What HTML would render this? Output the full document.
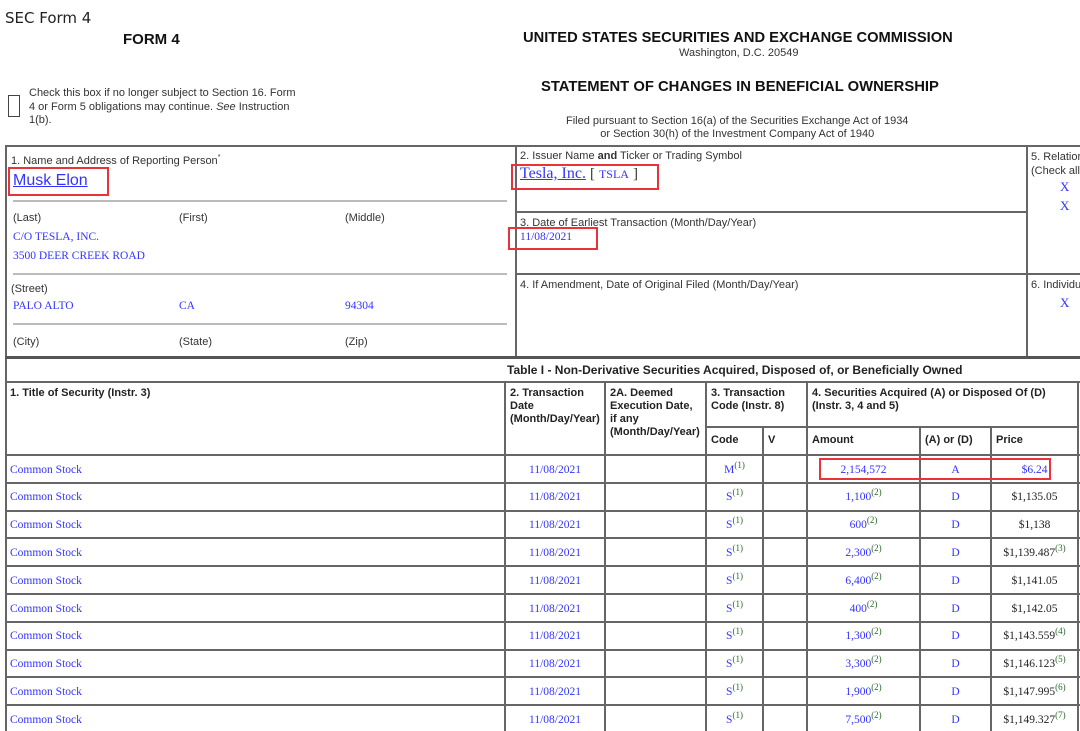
<!DOCTYPE html>
<html><head><meta charset="utf-8"><style>
*{margin:0;padding:0;box-sizing:border-box}
body{width:1080px;height:731px;overflow:hidden;background:#fff;position:relative;font-family:"Liberation Sans",Arial,sans-serif;color:#222}
.a{position:absolute;white-space:nowrap}
.h{position:absolute;background:#666;height:2px}
.v{position:absolute;background:#666;width:2px}
.d{position:absolute;height:2px;background:#bbb}
.s{font-size:11px;color:#333}
.b{font-family:"Liberation Serif",serif;color:#3333ff;font-size:11.5px}
.hd{font-size:11px;font-weight:bold;color:#222;line-height:13px}
.red{position:absolute;border:2px solid #e8333b}
sup{font-size:9px;color:#2a6a2a;vertical-align:5px;line-height:0}
u{text-decoration:underline}
</style></head><body>
<div class="a" style="left:5px;top:9px;font-size:15px;font-family:'DejaVu Sans',sans-serif;color:#222">SEC Form 4</div>
<div class="a" style="left:123px;top:31px;font-size:15px;font-weight:bold;color:#111">FORM 4</div>
<div class="a" style="left:523px;top:30px;font-size:14.7px;font-weight:bold;color:#111">UNITED STATES SECURITIES AND EXCHANGE COMMISSION</div>
<div class="a" style="left:679px;top:47px;font-size:11px;color:#333">Washington, D.C. 20549</div>
<div class="a" style="left:541px;top:79px;font-size:14.8px;font-weight:bold;color:#111">STATEMENT OF CHANGES IN BENEFICIAL OWNERSHIP</div>
<div class="a" style="left:566px;top:115px;font-size:11px;color:#333;text-align:center;line-height:13px">Filed pursuant to Section 16(a) of the Securities Exchange Act of 1934<br>or Section 30(h) of the Investment Company Act of 1940</div>
<div class="a" style="left:8px;top:95px;width:12px;height:22px;border:1.5px solid #444"></div>
<div class="a" style="left:29px;top:87px;font-size:11px;color:#333;line-height:13.5px">Check this box if no longer subject to Section 16. Form<br>4 or Form 5 obligations may continue. <i>See</i> Instruction<br>1(b).</div>

<div class="h" style="left:5px;top:145px;width:1075px"></div>
<div class="v" style="left:5px;top:145px;height:586px"></div>
<div class="v" style="left:515px;top:145px;height:212px"></div>
<div class="v" style="left:1026px;top:145px;height:212px"></div>
<div class="h" style="left:515px;top:211px;width:512px"></div>
<div class="h" style="left:515px;top:273px;width:565px"></div>
<div class="h" style="left:5px;top:356px;width:1075px;height:3px;background:#555"></div>
<div class="d" style="left:13px;top:200px;width:494px"></div>
<div class="d" style="left:13px;top:273px;width:494px"></div>
<div class="d" style="left:13px;top:323px;width:494px"></div>

<div class="a s" style="left:11px;top:155px">1. Name and Address of Reporting Person<sup style="color:#333;font-size:7px">*</sup></div>
<div class="a" style="left:13px;top:172px;font-size:16px;color:#3333ff"><u>Musk Elon</u></div>
<div class="red" style="left:8px;top:167px;width:101px;height:29px"></div>
<div class="a s" style="left:13px;top:212px">(Last)</div>
<div class="a s" style="left:179px;top:212px">(First)</div>
<div class="a s" style="left:345px;top:212px">(Middle)</div>
<div class="a b" style="left:13px;top:231px">C/O TESLA, INC.</div>
<div class="a b" style="left:13px;top:250px">3500 DEER CREEK ROAD</div>
<div class="a s" style="left:11px;top:283px">(Street)</div>
<div class="a b" style="left:13px;top:300px">PALO ALTO</div>
<div class="a b" style="left:179px;top:300px">CA</div>
<div class="a b" style="left:345px;top:300px">94304</div>
<div class="a s" style="left:13px;top:336px">(City)</div>
<div class="a s" style="left:179px;top:336px">(State)</div>
<div class="a s" style="left:345px;top:336px">(Zip)</div>

<div class="a s" style="left:520px;top:150px">2. Issuer Name <b>and</b> Ticker or Trading Symbol</div>
<div class="a" style="left:520px;top:165px;font-size:16px;font-family:'Liberation Serif',serif;color:#3333ff"><u>Tesla, Inc.</u> <span style="color:#333;font-size:15px">[</span> <span style="font-size:12px">TSLA</span> <span style="color:#333;font-size:15px">]</span></div>
<div class="red" style="left:511px;top:164px;width:148px;height:26px"></div>
<div class="a s" style="left:520px;top:217px">3. Date of Earliest Transaction (Month/Day/Year)</div>
<div class="a b" style="left:520px;top:231px">11/08/2021</div>
<div class="red" style="left:508px;top:227px;width:90px;height:23px"></div>
<div class="a s" style="left:520px;top:279px">4. If Amendment, Date of Original Filed (Month/Day/Year)</div>
<div class="a s" style="left:1031px;top:150px;line-height:14px">5. Relationship<br>(Check all</div>
<div class="a b" style="left:1060px;top:179px;font-size:13px">X</div>
<div class="a b" style="left:1060px;top:198px;font-size:13px">X</div>
<div class="a s" style="left:1031px;top:279px">6. Individual</div>
<div class="a b" style="left:1060px;top:295px;font-size:13px">X</div>

<div class="a" style="left:507px;top:363px;font-size:12px;font-weight:bold;color:#222">Table I - Non-Derivative Securities Acquired, Disposed of, or Beneficially Owned</div>
<div class="h" style="left:5px;top:381px;width:1075px"></div>
<div class="v" style="left:1077px;top:381px;height:350px"></div>
<div class="v" style="left:504px;top:381px;height:350px"></div>
<div class="v" style="left:604px;top:381px;height:350px"></div>
<div class="v" style="left:705px;top:381px;height:350px"></div>
<div class="v" style="left:762px;top:427px;height:304px"></div>
<div class="v" style="left:806px;top:381px;height:350px"></div>
<div class="v" style="left:919px;top:427px;height:304px"></div>
<div class="v" style="left:990px;top:427px;height:304px"></div>
<div class="h" style="left:705px;top:426px;width:373px"></div>
<div class="hd a" style="left:10px;top:387px">1. Title of Security (Instr. 3)</div>
<div class="hd a" style="left:510px;top:387px">2. Transaction<br>Date<br>(Month/Day/Year)</div>
<div class="hd a" style="left:610px;top:387px">2A. Deemed<br>Execution Date,<br>if any<br>(Month/Day/Year)</div>
<div class="hd a" style="left:711px;top:387px">3. Transaction<br>Code (Instr. 8)</div>
<div class="hd a" style="left:812px;top:387px">4. Securities Acquired (A) or Disposed Of (D)<br>(Instr. 3, 4 and 5)</div>
<div class="hd a" style="left:711px;top:434px">Code</div>
<div class="hd a" style="left:768px;top:434px">V</div>
<div class="hd a" style="left:812px;top:434px">Amount</div>
<div class="hd a" style="left:925px;top:434px">(A) or (D)</div>
<div class="hd a" style="left:996px;top:434px">Price</div>
<div class="h" style="left:5px;top:454px;width:1075px"></div>
<div id="rows"></div>
<div class="red" style="left:819px;top:458px;width:232px;height:22px"></div>
<script>
var d=[["M","2,154,572","","A","$6.24",""],["S","1,100","2","D","$1,135.05",""],["S","600","2","D","$1,138",""],["S","2,300","2","D","$1,139.487","3"],["S","6,400","2","D","$1,141.05",""],["S","400","2","D","$1,142.05",""],["S","1,300","2","D","$1,143.559","4"],["S","3,300","2","D","$1,146.123","5"],["S","1,900","2","D","$1,147.995","6"],["S","7,500","2","D","$1,149.327","7"]];
var h="";
for(var i=0;i<d.length;i++){var t=455+i*27.8;var y=t+8.5;var r=d[i];
h+='<div class="a b" style="left:10px;top:'+y+'px">Common Stock</div>';
h+='<div class="a b" style="left:505px;width:100px;text-align:center;top:'+y+'px">11/08/2021</div>';
h+='<div class="a b" style="left:706px;width:57px;text-align:center;top:'+y+'px">'+r[0]+'<sup>(1)</sup></div>';
h+='<div class="a b" style="left:807px;width:113px;text-align:center;top:'+y+'px">'+r[1]+(r[2]?'<sup>('+r[2]+')</sup>':'')+'</div>';
h+='<div class="a b" style="left:920px;width:71px;text-align:center;top:'+y+'px">'+r[3]+'</div>';
h+='<div class="a b" style="left:991px;width:87px;text-align:center;top:'+y+'px;'+(i==0?'':'color:#222')+'">'+r[4]+(r[5]?'<sup>('+r[5]+')</sup>':'')+'</div>';
if(i>0)h+='<div class="h" style="left:5px;top:'+(t-1)+'px;width:1075px"></div>';}
document.getElementById("rows").innerHTML=h;
</script>
</body></html>
